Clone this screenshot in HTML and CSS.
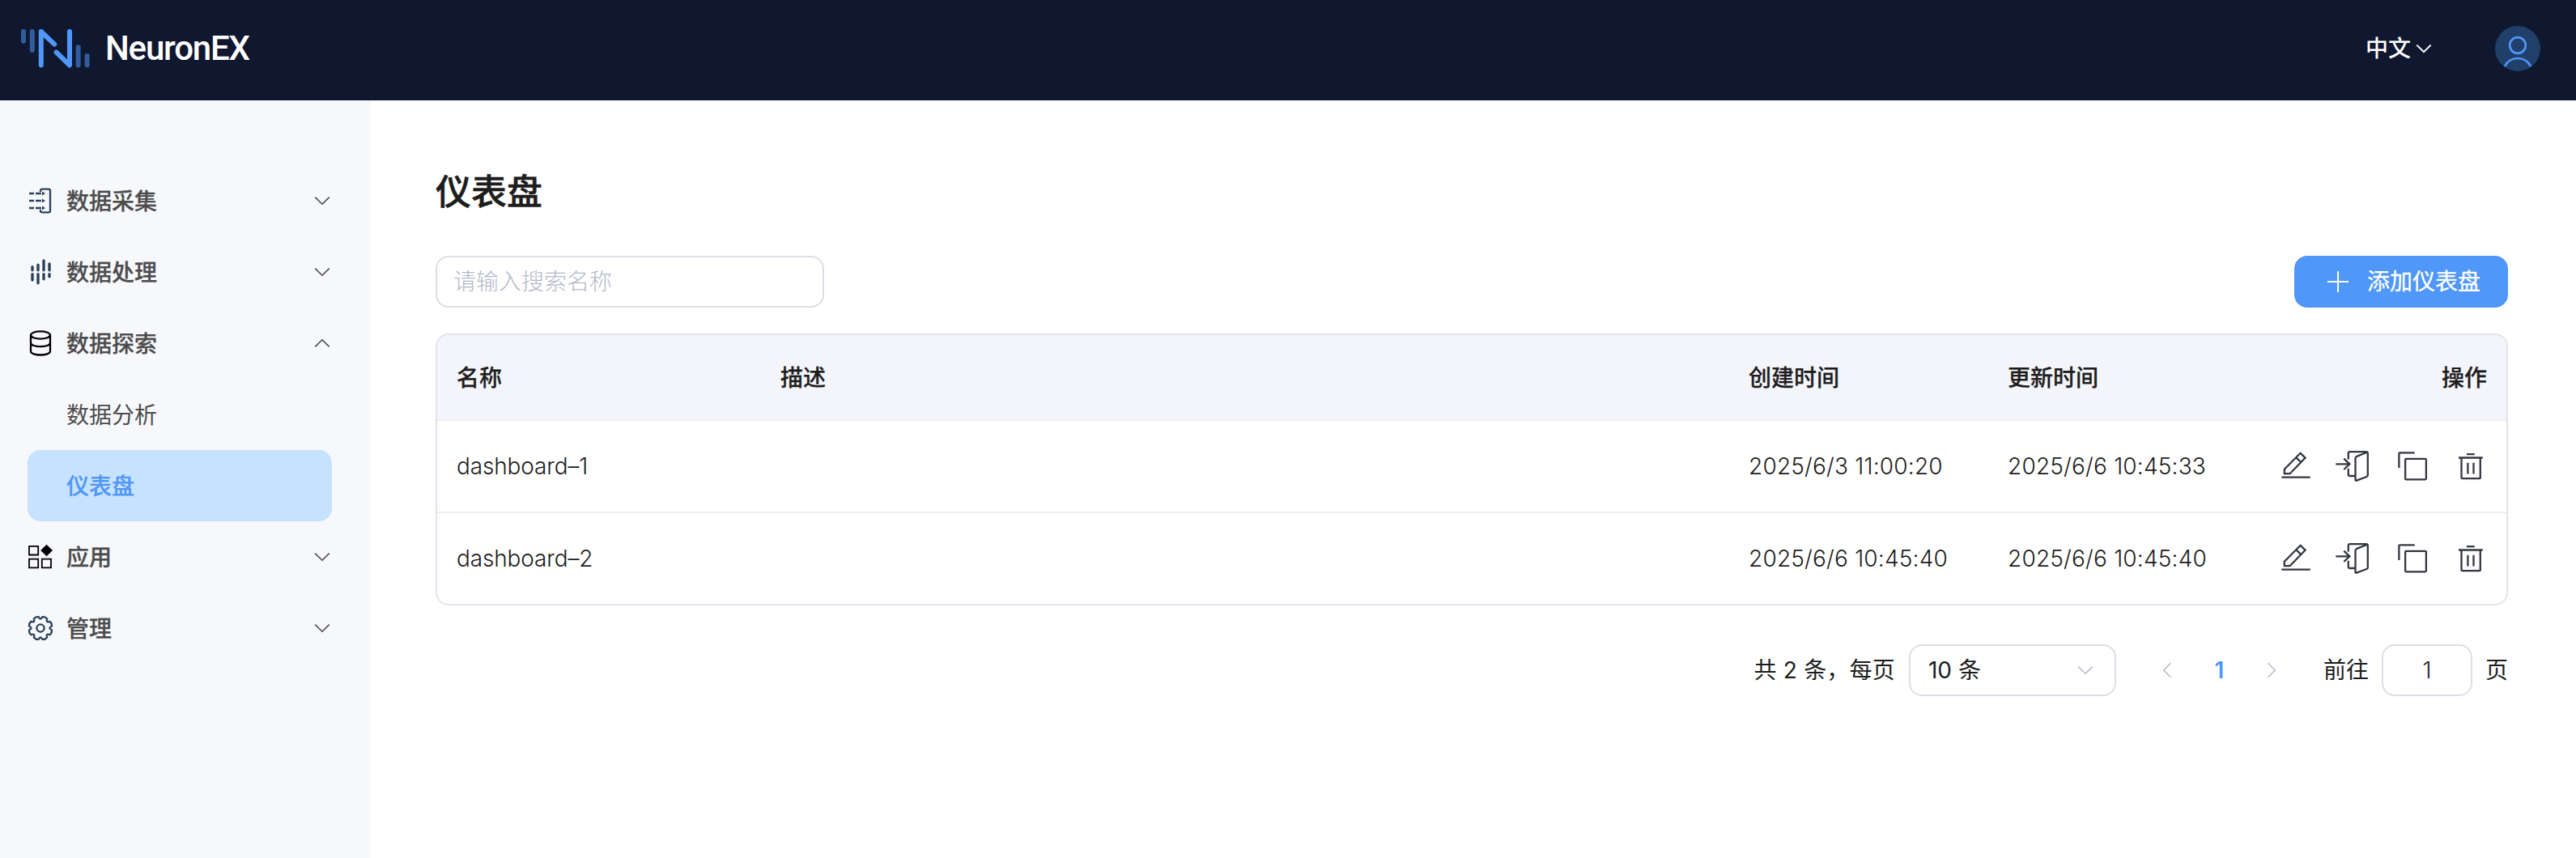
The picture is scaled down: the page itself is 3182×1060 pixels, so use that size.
FILE: index.html
```
<!DOCTYPE html>
<html lang="zh-CN">
<head>
<meta charset="utf-8">
<title>NeuronEX</title>
<link rel="stylesheet" href="styles.css">
</head>
<body>
<svg class="sprite" width="0" height="0" aria-hidden="true">
  <symbol id="chevron" viewBox="0 0 20 12"><path d="M1.3 1.6 10 10.2 18.7 1.6"/></symbol>
  <symbol id="edit" viewBox="0 0 40 40"><path d="M2.3 33.6H37.7M5.8 29.2V23.7L25.6 3.8 31.6 9.6 12.6 29.2ZM20.4 9.4 26.2 15"/></symbol>
  <symbol id="enter" viewBox="0 0 40 40"><path d="M-2.7 17.3H14.4M7.3 10.7 14.4 17.3 7.3 24M12.8 11.4V4Q12.8 2.1 14.7 2.1H34.7Q36.8 2.1 36.8 4.2V31Q36.8 32.5 35.4 33L23 37.7Q21.5 38.2 21.5 36.6V10.4Q21.5 8.6 23.2 7.9L36 2.8M12.8 22.8V30Q12.8 32 14.8 32H20.6"/></symbol>
  <symbol id="copy" viewBox="0 0 40 40"><path d="M3.4 22V4.3Q3.4 3.4 4.3 3.4H22.7"/><rect x="11.1" y="10.9" width="25.8" height="25.4" rx="1"/></symbol>
  <symbol id="trash" viewBox="0 0 40 40"><path d="M15 5.2H24.7M5 9.5H34.8M8.5 9.5V34.2Q8.5 35.2 9.5 35.2H30.8Q31.8 35.2 31.8 34.2V9.5M16.4 15.8V29.4M23.5 15.8V29.4"/></symbol>
</svg>

<header class="topbar">
  <div class="brand">
    <svg class="brand-mark" viewBox="0 0 86 52">
      <path class="brand-soft" d="M5 5V16.7M15.8 5V28M72.6 24.3V46.5M83.6 35V46.5"/>
      <path class="brand-main" d="M26.8 46.5V5L43.2 20.6M45.6 30.6 62 46.5V5"/>
    </svg>
    <span class="brand-name">NeuronEX</span>
  </div>
  <div class="topbar-tools">
    <div class="language"><span>中文</span><svg class="chevron"><use href="#chevron"/></svg></div>
    <svg class="avatar" viewBox="0 0 56 56">
      <circle class="avatar-bg" cx="28" cy="28" r="28"/>
      <circle cx="28" cy="24" r="9.8"/>
      <path d="M12 50A17.8 17.8 0 0 1 44 50"/>
    </svg>
  </div>
</header>

<div class="layout">
  <nav class="sidebar">
    <div class="menu-item group">
      <svg class="menu-icon slate" viewBox="0 0 30 32"><path d="M15 5V3.6Q15 1.7 17 1.7H25Q27 1.7 27 3.6V28.4Q27 30.3 25 30.3H17Q15 30.3 15 28.4V27M1 7H7M9 7H16M1 16H7M9 16H16M1 25H7M9 25H16"/><path class="fill" d="M17 4.5 21 7 17 9.5ZM17 13.5 21 16 17 18.5ZM17 22.5 21 25 17 27.5Z"/></svg>
      <span class="menu-label">数据采集</span><svg class="chevron"><use href="#chevron"/></svg>
    </div>
    <div class="menu-item group">
      <svg class="menu-icon slate bars" viewBox="0 0 30 32"><path d="M5 9.8V13.8M12 7.3V13.8M19 2V13.8M26 6V13.8M5 18.6V26M12 18.6V29.7M19 18.6V24.7M26 18.6V21.8"/></svg>
      <span class="menu-label">数据处理</span><svg class="chevron"><use href="#chevron"/></svg>
    </div>
    <div class="menu-item group">
      <svg class="menu-icon" viewBox="0 0 30 32"><ellipse cx="15" cy="6" rx="12" ry="4.6"/><path d="M3 6V26C3 32 27 32 27 26V6M3 15.5C3 21.7 27 21.7 27 15.5"/></svg>
      <span class="menu-label">数据探索</span><svg class="chevron open"><use href="#chevron"/></svg>
    </div>
    <div class="menu-item sub"><span>数据分析</span></div>
    <div class="menu-item sub active"><span>仪表盘</span></div>
    <div class="menu-item group">
      <svg class="menu-icon grid" viewBox="0 0 30 32"><path d="M1 2.8H12.2V13.5H1ZM1 18.6H12.2V29.4H1ZM16.8 18.6H28V29.4H16.8Z"/><path class="fill" d="M22.5.7 30 8 22.5 15.2 15.2 8Z"/></svg>
      <span class="menu-label">应用</span><svg class="chevron"><use href="#chevron"/></svg>
    </div>
    <div class="menu-item group">
      <svg class="menu-icon slate gear" viewBox="-15 -16 30 32"><circle r="4.6"/><path d="M13.83 2.19A6 6 0 0 1 11.33 8.23Q6.4 6.4 8.23 11.33A6 6 0 0 1 2.19 13.83Q0 9-2.19 13.83A6 6 0 0 1-8.23 11.33Q-6.4 6.4-11.33 8.23A6 6 0 0 1-13.83 2.19Q-9 0-13.83-2.19A6 6 0 0 1-11.33-8.23Q-6.4-6.4-8.23-11.33A6 6 0 0 1-2.19-13.83Q0-9 2.19-13.83A6 6 0 0 1 8.23-11.33Q6.4-6.4 11.33-8.23A6 6 0 0 1 13.83-2.19Q9 0 13.83 2.19Z"/></svg>
      <span class="menu-label">管理</span><svg class="chevron"><use href="#chevron"/></svg>
    </div>
  </nav>

  <main class="content">
    <h1 class="page-title">仪表盘</h1>
    <div class="toolbar">
      <input class="search" type="text" placeholder="请输入搜索名称">
      <button class="add-button" type="button">
        <svg class="plus" viewBox="0 0 26 26"><path d="M0 13H26M13 0V26"/></svg>
        <span>添加仪表盘</span>
      </button>
    </div>

    <div class="table">
      <div class="row head">
        <div>名称</div><div>描述</div><div>创建时间</div><div>更新时间</div><div class="actions">操作</div>
      </div>
      <div class="row">
        <div class="name">dashboard–1</div><div></div>
        <div>2025/6/3 11:00:20</div><div>2025/6/6 10:45:33</div>
        <div class="actions"><svg><use href="#edit"/></svg><svg><use href="#enter"/></svg><svg><use href="#copy"/></svg><svg><use href="#trash"/></svg></div>
      </div>
      <div class="row">
        <div class="name">dashboard–2</div><div></div>
        <div>2025/6/6 10:45:40</div><div>2025/6/6 10:45:40</div>
        <div class="actions"><svg><use href="#edit"/></svg><svg><use href="#enter"/></svg><svg><use href="#copy"/></svg><svg><use href="#trash"/></svg></div>
      </div>
    </div>

    <div class="pagination">
      <span class="total">共 2 条，每页</span>
      <div class="page-size"><span>10 条</span><svg class="chevron"><use href="#chevron"/></svg></div>
      <div class="pager">
        <svg class="chevron prev"><use href="#chevron"/></svg>
        <span class="current">1</span>
        <svg class="chevron next"><use href="#chevron"/></svg>
      </div>
      <span>前往</span>
      <div class="jump">1</div>
      <span>页</span>
    </div>
  </main>
</div>
</body>
</html>
```
FILE: styles.css
```
* { box-sizing: border-box; }

body {
  margin: 0;
  height: 1060px;
  display: flex;
  flex-direction: column;
  overflow: hidden;
  background: #fff;
  color: #1d1d1d;
  font: 400 28px/40px Inter, "Noto Sans CJK SC", sans-serif;
}

svg {
  flex: none;
  fill: none;
  stroke: currentColor;
  overflow: visible;
}

.sprite { position: absolute; }
.sprite symbol { overflow: visible; }

.chevron { width: 20px; height: 12px; stroke-width: 1.6; }

/* Top bar */
.topbar {
  flex: none;
  height: 124px;
  padding: 0 44px 4px 24px;
  display: flex;
  align-items: center;
  justify-content: space-between;
  background: #10182f;
  color: #fff;
}
.brand { display: flex; align-items: center; gap: 20px; }
.brand-mark { width: 86px; height: 52px; stroke-width: 6; stroke-linecap: round; stroke-linejoin: round; }
.brand-soft { stroke: #315d9e; }
.brand-main { stroke: #4f97f8; }
.brand-name { font: 500 42px/52px Roboto, sans-serif; letter-spacing: -1.2px; }
.topbar-tools { display: flex; align-items: center; gap: 78px; }
.language { display: flex; align-items: center; gap: 6px; font-weight: 500; }
.language .chevron { stroke-width: 2; }
.avatar { width: 56px; height: 56px; stroke: #4f97f8; stroke-width: 2.7; }
.avatar-bg { fill: #213f6b; stroke: none; }

/* Sidebar */
.layout { flex: 1; display: flex; }
.sidebar {
  flex: none;
  width: 458px;
  padding: 80px 48px 0 34px;
  background: #f7f8fc;
  color: #4c4c4c;
}
.menu-item { height: 88px; display: flex; align-items: center; border-radius: 16px; }
.group { padding: 0 2px 0 1px; font-weight: 500; }
.menu-icon { width: 30px; height: 32px; color: #000; stroke-width: 2.3; }
.menu-icon .fill { fill: currentColor; stroke: none; }
.menu-icon.slate { color: #2c4258; }
.menu-icon.bars { stroke-width: 3.4; stroke-linecap: round; }
.menu-icon.grid { stroke-width: 1.8; }
.gear { stroke-linejoin: round; }
.menu-label { flex: 1; margin-left: 17px; -webkit-text-stroke: 0.25px; }
.menu-item > span { padding-top: 2px; }
.open { transform: scaleY(-1); }
.sub { padding-left: 48px; }
.active { background: #c6e2fe; color: #4f97f8; font-weight: 500; -webkit-text-stroke: 0.2px; }

/* Content */
.content { flex: 1; padding: 81px 84px 0 80px; }
.page-title { margin: 0 0 47px; font-size: 44px; line-height: 64px; font-weight: 500; -webkit-text-stroke: 0.5px; }
.toolbar { display: flex; justify-content: space-between; margin-bottom: 32px; }
.search {
  width: 480px;
  height: 64px;
  padding: 0 20px;
  border: 2px solid #dcdfe6;
  border-radius: 16px;
  font: inherit;
  font-weight: 300;
}
.search::placeholder { color: #b5b9c9; opacity: 1; }
.add-button {
  width: 264px;
  height: 64px;
  padding: 0 34px 0 41px;
  display: flex;
  align-items: center;
  justify-content: space-between;
  border: 0;
  border-radius: 16px;
  background: #4f97f8;
  color: #fff;
  font: inherit;
  -webkit-text-stroke: 0.3px;
}
.plus { width: 26px; height: 26px; stroke-width: 2; }

/* Table */
.table { border: 2px solid #e1e4ea; border-radius: 16px; overflow: hidden; }
.row {
  height: 114px;
  display: grid;
  grid-template-columns: 400px 1fr 320px 320px 320px;
  align-items: center;
  border-bottom: 2px solid #ebeef5;
  font-weight: 350;
  letter-spacing: 0.2px;
}
.row > div { padding: 0 24px; }
.row > .name { letter-spacing: -0.15px; }
.row:last-child { height: 112px; border-bottom: 0; }
.row.head { height: 106px; background: #f4f5fb; font-weight: 500; letter-spacing: 0; -webkit-text-stroke: 0.25px; }
.head > div { padding-top: 2px; }
.row > .actions { display: flex; justify-content: flex-end; gap: 32px; color: #343741; }
.head > .actions { color: inherit; }
.actions svg { width: 40px; height: 40px; stroke-width: 2.3; }

/* Pagination */
.pagination { margin-top: 48px; height: 64px; display: flex; align-items: center; justify-content: flex-end; }
.page-size, .jump { height: 64px; border: 2px solid #dcdfe6; border-radius: 16px; }
.total { letter-spacing: 0.2px; }
.page-size {
  width: 256px;
  margin: 0 53px 0 17px;
  padding: 0 26px 0 22px;
  display: flex;
  align-items: center;
  justify-content: space-between;
}
.page-size .chevron, .prev, .next { color: #b9bdca; }
.pager { width: 149px; display: flex; align-items: center; justify-content: space-between; }
.prev { transform: rotate(90deg); }
.next { transform: rotate(-90deg); }
.current { color: #4f97f8; font-weight: 600; }
.jump { width: 112px; margin: 0 16px; line-height: 60px; text-align: center; font-weight: 350; }
.pager + span { margin-left: 54px; }
```
